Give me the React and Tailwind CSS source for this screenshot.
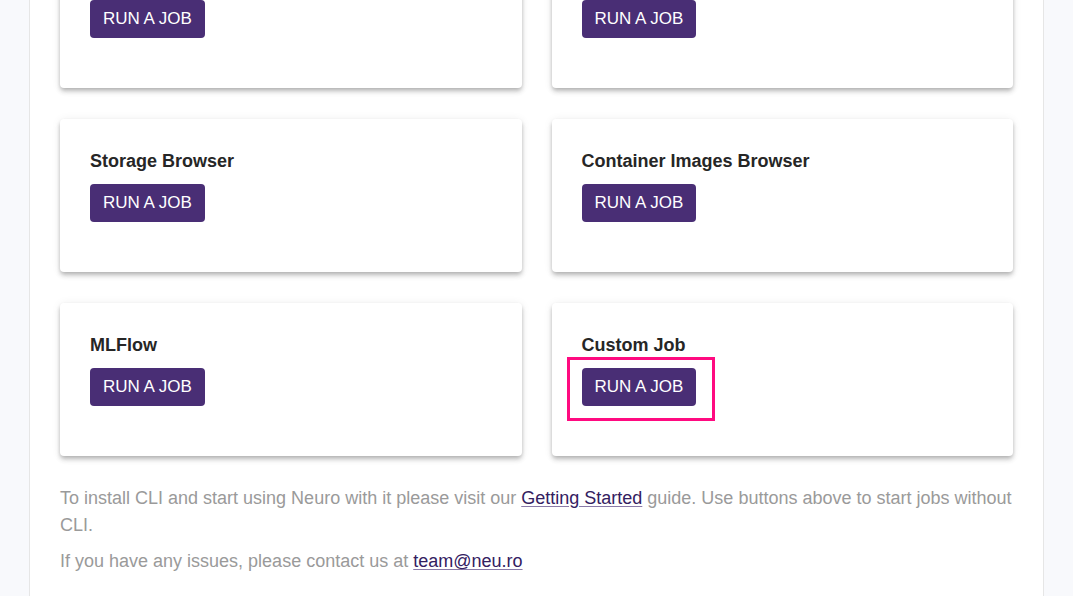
import React from "react";

function Card({ title, highlight }) {
  return (
    <div className="h-[153px] rounded-[4px] bg-white px-[30px] pt-[30px] shadow-[0_2px_4px_-1px_rgba(0,0,0,0.2),0_4px_5px_0_rgba(0,0,0,0.14),0_1px_10px_0_rgba(0,0,0,0.08)]">
      <div className="h-[24px] text-[18px] font-bold leading-[24px] text-[#262626] [font-family:'Liberation_Sans',Arial,sans-serif]">
        {title}
      </div>
      <div className="relative mt-[11px] inline-block">
        <button className="h-[38px] rounded-[4px] bg-[#492e75] px-[13px] text-[17px] leading-[38px] text-white [font-family:'Liberation_Sans',Arial,sans-serif]">
          RUN A JOB
        </button>
        {highlight && (
          <div className="pointer-events-none absolute -left-[15px] -top-[11px] h-[64px] w-[148px] border-[3px] border-[#ff0a80]" />
        )}
      </div>
    </div>
  );
}

export default function App() {
  return (
    <div className="h-[596px] overflow-hidden bg-[#f8f9fc]">
      <div className="mx-[29px] min-h-[700px] border-x border-[#e6e6e6] bg-white px-[30px]">
        <div className="-mt-[65px] grid grid-cols-2 gap-x-[30px] gap-y-[31px]">
          <Card title="Jupyter Notebook" />
          <Card title="Jupyter Lab" />
          <Card title="Storage Browser" />
          <Card title="Container Images Browser" />
          <Card title="MLFlow" />
          <Card title="Custom Job" highlight />
        </div>
        <div className="mt-[29px] text-[18px] leading-[27px] text-[#9a9a9a] [font-family:'Liberation_Sans',Arial,sans-serif]">
          <p>
            To install CLI and start using Neuro with it please visit our{" "}
            <a className="text-[#33205f] underline decoration-[#8a7aa8] underline-offset-2" href="#">
              Getting Started
            </a>{" "}
            guide. Use buttons above to start jobs without CLI.
          </p>
          <p className="mt-[9px]">
            If you have any issues, please contact us at{" "}
            <a className="text-[#33205f] underline decoration-[#8a7aa8] underline-offset-2" href="#">
              team@neu.ro
            </a>
          </p>
        </div>
      </div>
    </div>
  );
}
